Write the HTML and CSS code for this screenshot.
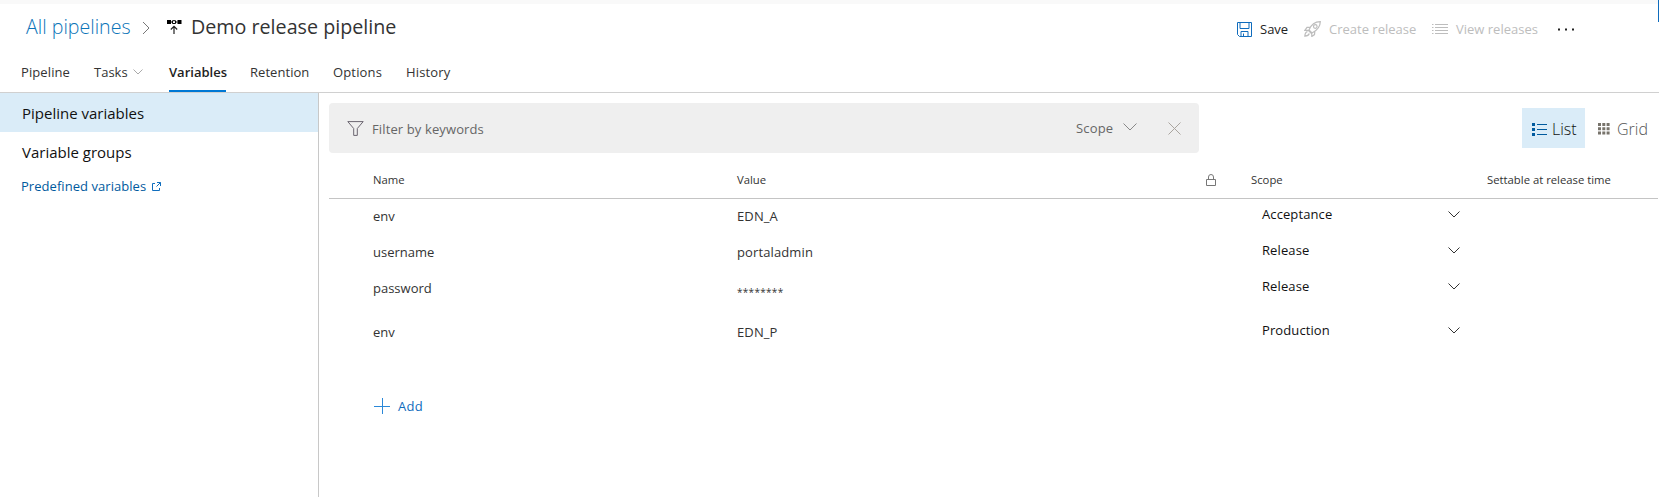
FILE: index.html
```
<!DOCTYPE html>
<html lang="en">
<head>
<meta charset="utf-8">
<title>Demo release pipeline</title>
<link rel="stylesheet" href="styles.css">
</head>
<body>
<div class="app">
  <div class="strip"></div>
  <header class="header">
    <div class="crumbs">
      <a class="crumb-link">All pipelines</a>
      <svg class="crumb-sep" width="8" height="14" viewBox="0 0 8 14"><path d="M1 1l6 6-6 6" fill="none" stroke="#777"/></svg>
      <svg class="crumb-icon" width="15" height="15" viewBox="0 0 15 15"><path d="M0 0h4v4H0zM10.500 0h4v4h-4z" fill="#000"/><path d="M5.500.700h3v2.800h-3zM4 2h1.500M9 2h1.500" fill="none" stroke="#000"/><path d="M7 14V6.500M3.800 9.500L7 6.300l3.200 3.200" fill="none" stroke="#222" stroke-width="1.200"/></svg>
      <h1 class="title">Demo release pipeline</h1>
    </div>
    <div class="actions">
      <svg width="15" height="15" viewBox="0 0 15 15" fill="none" stroke="#0f6cbd"><path d="M.5.5h14v14h-12l-2-2zM3 .5v6h9v-6M4 14v-4.500h7V14M6.500 11.500V14"/></svg>
      <span class="action act-save">Save</span>
      <svg class="rocket" width="17" height="16" viewBox="0 0 17 16" fill="none" stroke="#bdbdbd" stroke-width="1.200"><path d="M5 9C7 4 10.500.800 16.300.700 16.200 6 13 9.500 8 12zM6.200 6.200L3 6.400.900 9.300l4 .1M10.800 10.600l-.3 3L7.800 15.500 7.700 12M3.500 10.700C1.800 11 1 13 .8 15.200c2-.2 4-1 4.500-2.700M4.500 9.500l3 3"/><circle cx="11.300" cy="5.500" r="1.800"/></svg>
      <span class="action act-create">Create release</span>
      <svg class="lines" width="16" height="11" viewBox="0 0 16 11"><path d="M0 .5h1.500M3 .5h13M0 3.500h1.500M3 3.500h13M0 6.500h1.500M3 6.500h13M0 9.500h1.500M3 9.500h13" stroke="#bdbdbd"/></svg>
      <span class="action act-view">View releases</span>
      <svg class="dots" width="17" height="3" viewBox="0 0 17 3"><path d="M0 .5h2v2H0zM7 .5h2v2H7zM14 .5h2v2h-2z" fill="#222"/></svg>
    </div>
  </header>
  <nav class="tabs">
    <a class="tab t-pipeline">Pipeline</a>
    <a class="tab t-tasks"><span>Tasks</span><svg width="10" height="6" viewBox="0 0 10 6"><path d="M.5.5L5 5 9.500.500" fill="none" stroke="#aaa"/></svg></a>
    <a class="tab t-variables active">Variables</a>
    <a class="tab t-retention">Retention</a>
    <a class="tab t-options">Options</a>
    <a class="tab t-history">History</a>
  </nav>
  <div class="body">
    <aside class="side">
      <div class="side-item selected"><span>Pipeline variables</span></div>
      <div class="side-item groups"><span>Variable groups</span></div>
      <a class="side-link"><span>Predefined variables</span><svg width="9" height="9" viewBox="0 0 9 9" fill="none" stroke="#106ebe"><path d="M3 1.500H.5v7h7V6M5 .5h3.500V4M8.500.500L4.500 4.500"/></svg></a>
    </aside>
    <main class="main">
      <div class="toolbar">
        <div class="filter">
          <svg width="17" height="15" viewBox="0 0 17 15"><path d="M.8.600h15.400L10.300 7.500v6.900H6.700V7.500z" fill="none" stroke="#6b6570"/></svg>
          <span class="filter-text">Filter by keywords</span>
          <span class="filter-scope">Scope</span>
          <svg class="filter-chevron" width="14" height="8" viewBox="0 0 14 8"><path d="M.5.500L7 7 13.500.500" fill="none" stroke="#888"/></svg>
          <svg class="filter-clear" width="13" height="13" viewBox="0 0 13 13"><path d="M.5.500l12 12M12.500.500l-12 12" stroke="#aaa59f"/></svg>
        </div>
        <div class="views">
          <div class="view view-list"><svg width="15" height="13" viewBox="0 0 15 13"><path d="M0 0h3v3H0zM0 5h3v3H0zM0 10h3v3H0z" fill="#005a9e"/><path d="M5 1.500h10M5 6.500h10M5 11.500h10" stroke="#005a9e"/></svg><span>List</span></div>
          <div class="view view-grid"><svg width="12" height="12" viewBox="0 0 12 12"><path d="M0 0h3v3H0zM4.300 0h3v3h-3zM8.600 0h3v3h-3zM0 4.300h3v3H0zM4.300 4.300h3v3h-3zM8.600 4.300h3v3h-3zM0 8.600h3v3H0zM4.300 8.600h3v3h-3zM8.600 8.600h3v3h-3z" fill="#77736b"/></svg><span>Grid</span></div>
        </div>
      </div>
      <div class="row head">
        <span>Name</span><span>Value</span>
        <svg width="10" height="12" viewBox="0 0 10 12" fill="none" stroke="#777"><path d="M.5 5.500h9v6h-9zM2.500 5.500V3a2.500 2.500 0 0 1 5 0v2.500"/></svg>
        <span>Scope</span><span class="settable">Settable at release time</span>
      </div>
      <div class="row"><span>env</span><span class="value">EDN_A</span><div class="scope"><span>Acceptance</span><svg width="12" height="7" viewBox="0 0 12 7"><path d="M.5.500L6 6 11.500.500" fill="none" stroke="#333"/></svg></div></div>
      <div class="row"><span class="username">username</span><span class="value">portaladmin</span><div class="scope"><span>Release</span><svg width="12" height="7" viewBox="0 0 12 7"><path d="M.5.500L6 6 11.500.500" fill="none" stroke="#333"/></svg></div></div>
      <div class="row"><span>password</span><span class="value secret">********</span><div class="scope"><span>Release</span><svg width="12" height="7" viewBox="0 0 12 7"><path d="M.5.500L6 6 11.500.500" fill="none" stroke="#333"/></svg></div></div>
      <div class="row last"><span>env</span><span class="value">EDN_P</span><div class="scope"><span>Production</span><svg width="12" height="7" viewBox="0 0 12 7"><path d="M.5.500L6 6 11.500.500" fill="none" stroke="#333"/></svg></div></div>
      <a class="add"><svg width="16" height="16" viewBox="0 0 16 16"><path d="M0 8.500h16M8.500 0v16" stroke="#2b88d8"/></svg><span>Add</span></a>
    </main>
  </div>
  <div class="edge"></div>
</div>
</body>
</html>
```
FILE: styles.css
```
* { box-sizing: border-box; }
body { margin: 0; background: #fff; color: #333; font: 13px/20px "Open Sans", "Noto Sans", sans-serif; overflow: hidden; }
svg { display: block; flex: none; }
span, a, h1 { white-space: nowrap; }
.app { position: relative; width: 1659px; height: 497px; display: flex; flex-direction: column; }
.strip { height: 4px; background: #f9f9f9; }
.edge { position: absolute; top: 0; right: 0; width: 1px; height: 22px; background: #0f6cbd; }

.header { height: 52px; display: flex; justify-content: space-between; padding-left: 26px; }
.crumbs { display: flex; align-items: center; height: 48px; }
.crumb-link { width: 116px; padding-bottom: 2px; font-size: 19.6px; font-weight: 300; color: #0b74b8; }
.crumb-sep { margin-right: 17px; }
.crumb-icon { margin-right: 9px; margin-top: -2px; }
.title { margin: 0; padding-bottom: 2px; font-size: 19.7px; font-weight: 400; color: #333; }

.actions { display: flex; align-items: center; height: 50px; width: 422px; }
.action { margin-left: 8px; color: #bdbdbd; }
.act-save { width: 44px; color: #222; }
.act-create { width: 103px; }
.act-view { width: 102px; }

.tabs { display: flex; height: 37px; padding-left: 21px; border-bottom: 1px solid #d0d0d0; }
.tab { display: flex; align-items: center; height: 36px; padding-bottom: 4px; color: #333; flex: none; }
.t-pipeline { width: 73px; letter-spacing: 0.1px; }
.t-tasks { width: 75px; gap: 5px; }
.t-variables { width: 57px; margin-right: 24px; }
.t-retention { width: 83px; letter-spacing: 0.05px; }
.t-options { width: 73px; letter-spacing: 0.15px; }
.t-history { letter-spacing: 0.15px; }
.active { font-weight: 600; color: #222; border-bottom: 2px solid #0078d4; padding-bottom: 2px; }

.body { flex: 1; display: flex; }
.side { width: 319px; border-right: 1px solid #c8c8c8; }
.side-item { height: 39px; padding-left: 22px; display: flex; align-items: center; font-size: 15px; color: #111; }
.selected { background: #daecf8; }
.side-link { display: flex; align-items: center; gap: 6px; margin-top: 5px; padding-left: 21px; color: #005a9e; letter-spacing: 0.05px; }

.main { flex: 1; padding: 10px 1px 0 10px; }
.toolbar { display: flex; justify-content: space-between; }
.filter { width: 870px; height: 50px; display: flex; align-items: center; padding-left: 18px; background: #efefef; border-radius: 4px; color: #666; }
.filter-text { width: 704px; margin-left: 8px; padding-top: 1px; letter-spacing: 0.12px; }
.filter-scope { width: 47px; letter-spacing: 0.15px; }
.filter-chevron { margin-right: 31px; margin-top: -2px; }
.views { display: flex; margin-top: 5px; height: 40px; width: 136px; }
.view { display: flex; align-items: center; padding-top: 2px; font-size: 16px; font-weight: 300; }
.view-list { width: 63px; padding-left: 10px; gap: 5px; background: #daecf8; color: #111; }
.view-grid { padding-left: 13px; gap: 7px; color: #555; }

.row { display: grid; grid-template-columns: 364px 469px 45px 236px 1fr; height: 36px; padding-left: 44px; padding-bottom: 2px; align-items: center; }
.head { height: 46px; padding-top: 8px; padding-bottom: 0; border-bottom: 1px solid #c4c4c4; font-size: 11.3px; }
.value { letter-spacing: 0.12px; }
.secret { padding-top: 8px; font-size: 10px; letter-spacing: 0.3px; }
.scope { grid-column: 4; display: flex; justify-content: space-between; align-items: center; width: 209px; padding-left: 11px; margin-top: -4px; color: #111; letter-spacing: 0.1px; }
.last { margin-top: 8px; }
.add { display: flex; align-items: center; gap: 8px; margin: 45px 0 0 45px; color: #0f6cbd; letter-spacing: 0.3px; }
```
